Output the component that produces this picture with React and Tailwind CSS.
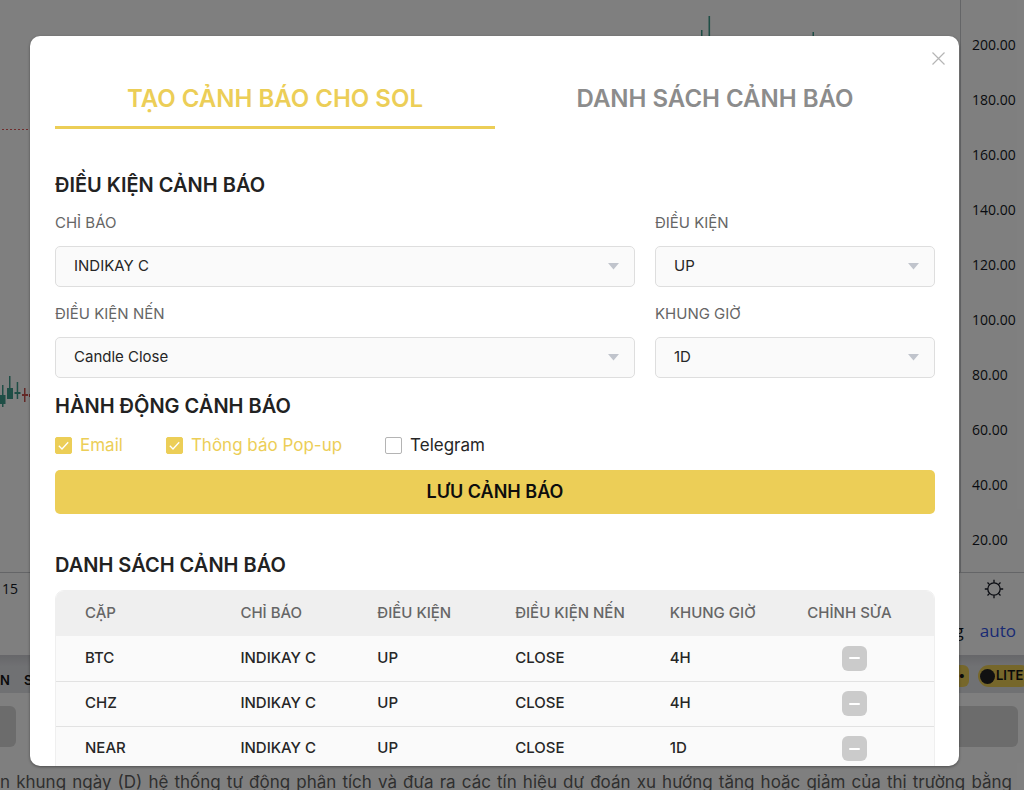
import { useState } from "react";

const PRICES = ["200.00", "180.00", "160.00", "140.00", "120.00", "100.00", "80.00", "60.00", "40.00", "20.00"];

const ALERTS = [
  { pair: "BTC", frame: "4H" },
  { pair: "CHZ", frame: "4H" },
  { pair: "NEAR", frame: "1D" },
];

function SettingsIcon() {
  return (
    <svg width="20" height="20" viewBox="0 0 20 20" fill="none" stroke="#131722" strokeWidth="1.3">
      <circle cx="10" cy="10" r="6.2" />
      <path d="M10 0.8V3.8M10 16.2V19.2M0.8 10H3.8M16.2 10H19.2M3.5 3.5L5.6 5.6M14.4 14.4L16.5 16.5M3.5 16.5L5.6 14.4M14.4 5.6L16.5 3.5" />
    </svg>
  );
}

function ChartLeft() {
  return (
    <svg className="h-[572px] w-[30px] shrink-0" viewBox="0 0 30 572">
      <path d="M2 129.5H30" stroke="#e05a5a" strokeDasharray="2 2" />
      <g fill="#3f9c8c">
        <rect x="2" y="385" width="1.5" height="22" />
        <rect x="0" y="395" width="5.5" height="9" />
        <rect x="9" y="376" width="1.5" height="23" />
        <rect x="7" y="388" width="6" height="11" />
        <rect x="16.7" y="382" width="1.5" height="17" />
        <rect x="14.5" y="392" width="6" height="2" />
      </g>
      <g fill="#c8504c">
        <rect x="24" y="388" width="1.5" height="14" />
        <rect x="22" y="394" width="6" height="2" />
        <rect x="29" y="394" width="1" height="3" />
      </g>
    </svg>
  );
}

function ChartRight() {
  return (
    <svg className="ml-auto h-[40px] w-[260px] shrink-0" viewBox="0 0 260 40" fill="#3f9c8c">
      <rect x="1" y="30" width="1.5" height="10" />
      <rect x="8.5" y="16" width="1.6" height="24" />
      <rect x="112.5" y="32" width="1.5" height="8" />
    </svg>
  );
}

function TradingPage() {
  return (
    <div className="bg-white" aria-hidden="true">
      <div className="flex h-[572px]">
        <ChartLeft />
        <div className="flex flex-1">
          <ChartRight />
        </div>
        <div className="flex w-[64px] flex-col border-l border-[#c8cace] pt-[17px] pl-[11px] font-['Open_Sans',sans-serif] text-sm text-[#131722]">
          {PRICES.map((p) => (
            <span key={p} className="flex h-[55px] items-center">{p}</span>
          ))}
        </div>
      </div>
      <div className="flex h-[83px] justify-between border-t border-[#c8cace] font-['Open_Sans',sans-serif] text-[#131722]">
        <span className="pt-[6px] pl-[2px] text-sm leading-5">15</span>
        <div className="flex flex-col items-end">
          <span className="pt-[6px] pr-[20px]"><SettingsIcon /></span>
          <span className="flex gap-4 pt-[20px] pr-2 text-[17px] leading-6">
            <span>log</span>
            <span className="text-[#3355e8]">auto</span>
          </span>
        </div>
      </div>
      <div className="flex h-[38px] items-center justify-between bg-[#e1e2e7] bg-linear-to-b from-[#cdced3] to-[#e1e2e7] to-30% text-[13px] font-semibold text-[#141414]">
        <span className="flex gap-[14px] pt-[14px]"><span>N</span><span>S</span></span>
        <span className="flex gap-[9px] overflow-hidden pt-[4px]">
          <span className="flex h-[22px] w-[40px] items-center justify-end rounded-md bg-[#ecce57] pr-1">•</span>
          <span className="-mr-2 flex h-[22px] w-[54px] items-center rounded-full bg-[#ecce57] pl-[2px]">
            <span className="size-[15px] shrink-0 rounded-full bg-[#222]" />
            <span className="pl-px">LITE</span>
          </span>
        </span>
      </div>
      <div className="flex justify-between pt-[13px] pr-[6px]">
        <span className="h-[41px] w-[16px] rounded-r-md bg-[#d9d9d9]" />
        <span className="h-[41px] w-[300px] rounded-md bg-[#d9d9d9]" />
      </div>
      <p className="pt-[23px] pr-3 text-[17px] leading-6 text-[#5f5f5f] [text-align-last:justify]">
        n khung ngày (D) hệ thống tự động phân tích và đưa ra các tín hiệu dự đoán xu hướng tăng hoặc giảm của thị trường bằng
      </p>
    </div>
  );
}

function SelectField({ id, label, options }) {
  return (
    <div className="flex flex-col gap-[13px]">
      <label htmlFor={id} className="text-[15px] leading-5 text-[#666]">{label}</label>
      <div className="relative">
        <select
          id={id}
          className="h-[41px] w-full appearance-none rounded-[5px] border border-[#dedede] bg-[#fafafa] pr-10 pl-[18px] text-[15px] text-[#262626]"
        >
          {options.map((o) => (
            <option key={o}>{o}</option>
          ))}
        </select>
        <svg className="pointer-events-none absolute top-[17px] right-4" width="11" height="7" viewBox="0 0 11 7">
          <path d="M0 0H11L5.5 6.6Z" fill="#c0c4cc" />
        </svg>
      </div>
    </div>
  );
}

function CheckOption({ label, defaultChecked }) {
  const [checked, setChecked] = useState(defaultChecked);
  return (
    <label className={checked ? "flex items-center gap-2 text-[#ecce57]" : "flex items-center gap-2 text-[#262626]"}>
      <span className="relative flex size-[17px]">
        <input
          type="checkbox"
          checked={checked}
          onChange={(e) => setChecked(e.target.checked)}
          className="size-[17px] appearance-none rounded-[2px] border border-[#b4b4b4] bg-white checked:border-[#ecce57] checked:bg-[#ecce57]"
        />
        {checked && (
          <svg className="pointer-events-none absolute inset-0" width="17" height="17" viewBox="0 0 17 17" fill="none">
            <path d="M3.8 8.8L7 12L13.2 5.2" stroke="#fff" strokeWidth="1.3" />
          </svg>
        )}
      </span>
      {label}
    </label>
  );
}

function SectionTitle({ children }) {
  return <h2 className="text-xl leading-[30px] font-semibold text-[#222]">{children}</h2>;
}

function AlertTable() {
  return (
    <div className="overflow-hidden rounded-t-[9px] border border-[#efefef]">
      <table className="w-full table-fixed border-collapse bg-[#fafafa] text-left text-[15px] font-medium text-[#262626]">
        <colgroup>
          <col className="w-[21%]" />
          <col className="w-[15.6%]" />
          <col className="w-[15.7%]" />
          <col className="w-[17.6%]" />
          <col className="w-[14.2%]" />
          <col />
        </colgroup>
        <thead className="bg-[#efefef] text-[#666]">
          <tr className="h-[45px]">
            <th scope="col" className="pl-[29px] font-medium">CẶP</th>
            <th scope="col" className="font-medium">CHỈ BÁO</th>
            <th scope="col" className="font-medium">ĐIỀU KIỆN</th>
            <th scope="col" className="font-medium">ĐIỀU KIỆN NẾN</th>
            <th scope="col" className="font-medium">KHUNG GIỜ</th>
            <th scope="col" className="pl-[13px] font-medium">CHỈNH SỬA</th>
          </tr>
        </thead>
        <tbody>
          {ALERTS.map((a) => (
            <tr key={a.pair} className="h-[45px] border-b border-[#e2e2e2]">
              <td className="pl-[29px]">{a.pair}</td>
              <td>INDIKAY C</td>
              <td>UP</td>
              <td>CLOSE</td>
              <td>{a.frame}</td>
              <td className="pl-[48px]">
                <button type="button" aria-label={`Xóa ${a.pair}`} className="flex size-[25px] items-center justify-center rounded-md bg-[#cbcbcb]">
                  <span className="h-[2px] w-[11px] rounded-full bg-white" />
                </button>
              </td>
            </tr>
          ))}
        </tbody>
      </table>
    </div>
  );
}

export default function App() {
  return (
    <div className="relative h-screen overflow-hidden font-['Inter',sans-serif]">
      <TradingPage />
      <div className="absolute inset-0 flex bg-black/50 pt-9 pr-[65px] pb-6 pl-[30px]">
        <div role="dialog" aria-label="Tạo cảnh báo cho SOL" className="relative flex-1 overflow-hidden rounded-[10px] bg-white pt-10 pr-6 pl-[25px] shadow-[0_1px_3px_rgba(0,0,0,0.4)]">
          <button type="button" aria-label="Đóng" className="absolute top-4 right-[14px]">
            <svg width="13" height="13" viewBox="0 0 13 13" stroke="#b5b5b5" strokeWidth="1.2">
              <path d="M0.5 0.5L12.5 12.5M12.5 0.5L0.5 12.5" />
            </svg>
          </button>
          <div role="tablist" className="grid grid-cols-2 text-2xl leading-[46px] font-semibold">
            <button type="button" role="tab" aria-selected="true" className="border-b-[3px] border-[#ecce57] pb-1 text-[#ecce57]">
              TẠO CẢNH BÁO CHO SOL
            </button>
            <button type="button" role="tab" aria-selected="false" className="border-b-[3px] border-transparent pb-1 text-[#8c8c8c]">
              DANH SÁCH CẢNH BÁO
            </button>
          </div>
          <form className="flex flex-col pt-[41px]" onSubmit={(e) => e.preventDefault()}>
            <SectionTitle>ĐIỀU KIỆN CẢNH BÁO</SectionTitle>
            <div className="grid grid-cols-[58fr_28fr] gap-x-5 gap-y-[17px] py-[13px]">
              <SelectField id="indicator" label="CHỈ BÁO" options={["INDIKAY C"]} />
              <SelectField id="condition" label="ĐIỀU KIỆN" options={["UP", "DOWN"]} />
              <SelectField id="candle" label="ĐIỀU KIỆN NẾN" options={["Candle Close"]} />
              <SelectField id="frame" label="KHUNG GIỜ" options={["1D", "4H"]} />
            </div>
            <SectionTitle>HÀNH ĐỘNG CẢNH BÁO</SectionTitle>
            <div className="flex gap-[43px] pt-3 pb-[13px] text-[17px] leading-6">
              <CheckOption label="Email" defaultChecked />
              <CheckOption label="Thông báo Pop-up" defaultChecked />
              <CheckOption label="Telegram" defaultChecked={false} />
            </div>
            <button type="submit" className="h-[44px] rounded-[5px] bg-[#ecce57] text-lg font-semibold text-[#0d0d0d]">
              LƯU CẢNH BÁO
            </button>
          </form>
          <section className="flex flex-col gap-[10px] pt-[36px]">
            <SectionTitle>DANH SÁCH CẢNH BÁO</SectionTitle>
            <AlertTable />
          </section>
        </div>
      </div>
    </div>
  );
}
